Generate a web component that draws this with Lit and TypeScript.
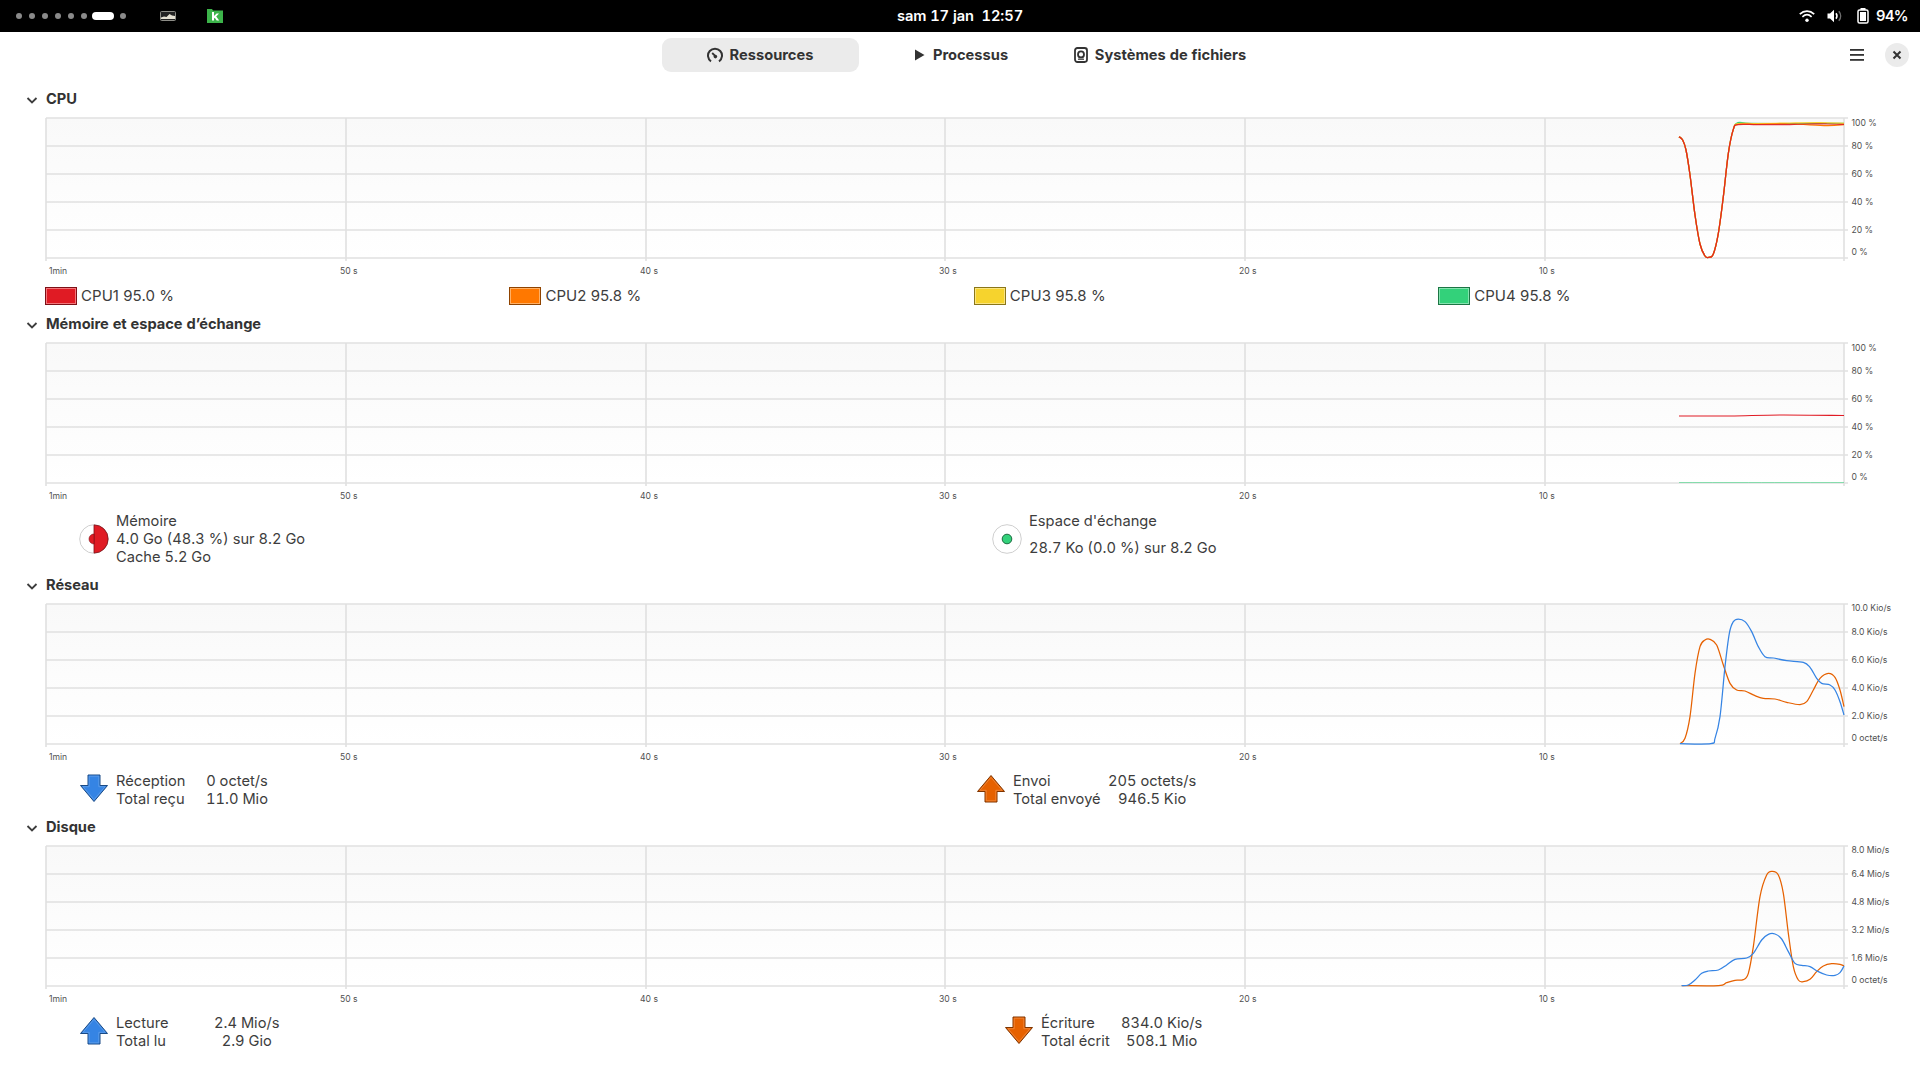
import { LitElement, css, html, svg } from 'lit';
import { customElement, property } from 'lit/decorators.js';

type Pt = [number, number];
interface Curve { color: string; pts: Pt[]; width?: number; alpha?: number }

const LEFT = 46;
const RIGHT = 1844;
const GRID_X = [346, 646, 945, 1245, 1545];
const X_LABELS: [number, string][] = [[49, '1min'], [340, '50 s'], [640, '40 s'], [939, '30 s'], [1239, '20 s'], [1539, '10 s']];

// points read off the 3x crops, so convert back to page coordinates
const crop = (top: number, pts: Pt[]): Pt[] => pts.map(([x, y]) => [1640 + x / 3, top + y / 3]);

function smooth(pts: Pt[]) {
  let d = `M${pts[0][0]} ${pts[0][1]}`;
  for (let i = 0; i < pts.length - 1; i++) {
    const p0 = pts[i - 1] || pts[i];
    const p1 = pts[i];
    const p2 = pts[i + 1];
    const p3 = pts[i + 2] || p2;
    const c1x = p1[0] + (p2[0] - p0[0]) / 6;
    const c1y = p1[1] + (p2[1] - p0[1]) / 6;
    const c2x = p2[0] - (p3[0] - p1[0]) / 6;
    const c2y = p2[1] - (p3[1] - p1[1]) / 6;
    d += ` C${c1x} ${c1y} ${c2x} ${c2y} ${p2[0]} ${p2[1]}`;
  }
  return d;
}

const cpuDip: Pt[] = [[117, 110], [128, 120], [138, 150], [150, 225], [165, 345], [180, 432], [195, 468], [207, 472], [220, 462], [235, 400], [250, 290], [265, 160], [280, 88]];

const CPU_CURVES: Curve[] = [
  { color: '#33d17a', pts: crop(100, [...cpuDip, [294, 68], [330, 70], [450, 71], [540, 70], [612, 70]]) },
  { color: '#f6d32d', pts: crop(100, [...cpuDip, [294, 71], [350, 71], [450, 69], [540, 68], [612, 70]]) },
  { color: '#ff7800', pts: crop(100, [...cpuDip, [294, 73], [350, 73], [450, 72], [560, 77], [612, 74]]) },
  { color: '#e01b24', alpha: 0.88, pts: crop(100, [...cpuDip, [294, 74], [350, 74], [420, 74], [500, 72], [560, 72], [612, 73]]) },
];

const MEM_CURVES: Curve[] = [
  { color: '#33d17a', width: 1, alpha: 0.55, pts: [[1679, 482.5], [1844, 482.5]] },
  { color: '#e01b24', width: 1.1, pts: [[1679, 416], [1730, 416], [1780, 415], [1844, 415.5]] },
];

const NET_CURVES: Curve[] = [
  { color: '#e66100', pts: crop(590, [[120, 461], [135, 445], [150, 380], [165, 250], [180, 170], [195, 150], [210, 148], [230, 165], [250, 225], [270, 280], [290, 300], [315, 303], [345, 317], [370, 325], [405, 327], [440, 337], [480, 344], [500, 335], [520, 300], [540, 265], [565, 250], [585, 262], [600, 300], [612, 350]]) },
  { color: '#3584e4', pts: crop(590, [[120, 461], [212, 461], [225, 445], [240, 380], [255, 230], [268, 130], [280, 95], [295, 87], [315, 95], [335, 125], [355, 170], [375, 200], [400, 204], [440, 212], [490, 217], [510, 232], [530, 265], [545, 280], [570, 285], [585, 300], [600, 335], [612, 375]]) },
];

const DISK_CURVES: Curve[] = [
  { color: '#e66100', pts: crop(840, [[125, 437], [235, 437], [260, 428], [285, 421], [310, 419], [325, 400], [340, 320], [360, 170], [380, 105], [397, 94], [415, 105], [430, 160], [445, 280], [460, 380], [475, 420], [490, 425], [510, 418], [530, 395], [550, 378], [575, 371], [600, 373], [612, 378]]) },
  { color: '#3584e4', pts: crop(840, [[125, 437], [145, 435], [165, 420], [185, 400], [205, 393], [235, 390], [260, 375], [285, 358], [320, 354], [340, 340], [365, 300], [385, 283], [405, 282], [425, 297], [445, 335], [465, 370], [485, 376], [510, 380], [535, 395], [560, 405], [585, 406], [600, 398], [612, 378]]) },
];

@customElement('res-chart')
export class ResChart extends LitElement {
  @property({ type: Number }) top = 0;
  @property({ attribute: false }) curves: Curve[] = [];
  @property({ attribute: false }) yLabels: [number, string][] = [];

  render() {
    const top = this.top;
    const bottom = top + 140;
    const rows = [0, 28, 56, 84, 112, 140];
    return html`
      <svg width="1920" height="162" viewBox="0 ${top - 2} 1920 162">
        <defs>
          <linearGradient id="fade" x1="0" y1="0" x2="0" y2="1">
            <stop offset="0" stop-color="#f9f9f9"></stop>
            <stop offset="1" stop-color="#ffffff"></stop>
          </linearGradient>
        </defs>
        <rect x=${LEFT} y=${top} width=${RIGHT - LEFT} height="140" fill="url(#fade)"></rect>
        ${rows.map((r) => svg`<line class="grid" x1=${LEFT} x2=${RIGHT + 4} y1=${top + r} y2=${top + r}></line>`)}
        ${[LEFT, ...GRID_X, RIGHT].map((x) => svg`<line class="grid" x1=${x} x2=${x} y1=${top} y2=${bottom + 3}></line>`)}
        ${this.curves.map((c) => svg`<path d=${smooth(c.pts)} fill="none" stroke=${c.color} stroke-opacity=${c.alpha || 1} stroke-width=${c.width || 1.25}></path>`)}
        ${X_LABELS.map(([x, t]) => svg`<text class="axis" x=${x} y=${bottom + 15.7}>${t}</text>`)}
        ${this.yLabels.map(([y, t]) => svg`<text class="axis" x="1851.5" y=${y + 3}>${t}</text>`)}
      </svg>
    `;
  }

  static styles = css`
    :host { display: block; height: 162px; }
    svg { display: block; }
    .grid { stroke: #e0e0e0; stroke-width: 1.6; }
    .axis { font: 8.6px 'Inter', sans-serif; fill: #505050; }
  `;
}

const chevron = html`<svg class="chev" width="12" height="12" viewBox="0 0 12 12"><path d="M1.5 4l4.5 4.5L10.5 4" fill="none" stroke="#3d3d3d" stroke-width="1.8"></path></svg>`;

const arrow = (up: boolean, fill: string, edge: string, hi: string) => html`
  <svg class="arrow" width="30" height="29" viewBox="0 0 30 29">
    <g transform=${up ? 'translate(0 29) scale(1 -1)' : ''}>
      <path d="M9 1H21V11.5H28.5L15 27.5L1.5 11.5H9Z" fill=${fill} stroke=${edge} stroke-width="1"></path>
      <path d="M10.2 2.2H19.8V12.7H26L15 25.6L4 12.7H10.2Z" fill="none" stroke=${hi} stroke-width=".8"></path>
    </g>
  </svg>`;

const BLUE = ['#3584e4', '#1a4a85', '#62a0ea'] as const;
const ORANGE = ['#e66100', '#7f3500', '#f08a40'] as const;

const stat = (icon: unknown, rows: [string, string][], labelCol: number, wide: string) => html`
  <div class="stat ${wide}">
    ${icon}
    <div class="stat-grid" style="grid-template-columns:${labelCol}px auto">
      ${rows.map(([a, b]) => html`<span>${a}</span><span class="val">${b}</span>`)}
    </div>
  </div>`;

@customElement('app-root')
export class AppRoot extends LitElement {
  topBar() {
    return html`
      <div class="topbar">
        <div class="tb-left">
          <div class="dots">
            ${[0, 1, 2, 3, 4, 5].map(() => html`<i class="dot"></i>`)}
            <i class="pill"></i>
            <i class="dot"></i>
          </div>
          <svg class="tb-img" width="16" height="10" viewBox="0 0 16 10">
            <rect x=".5" y=".5" width="15" height="9" rx="1" fill="#222" stroke="#8c8c86"></rect>
            <path d="M1 8V6.5L4 5.5 6.5 6 9.5 3 12 4.5 15 5V8Z" fill="#e4e0d2"></path>
          </svg>
          <svg class="tb-k" width="16" height="14" viewBox="0 0 16 14">
            <path d="M0 0H5L6 1.5H16V14H0Z" fill="#3cb44a"></path>
            <path d="M5 3H7V7L9.6 4.5H12L9.2 7.4 12.2 11.5H9.7L7.8 8.8 7 9.5V11.5H5Z" fill="#fff"></path>
          </svg>
        </div>
        <div class="clock">sam 17 jan&nbsp; 12:57</div>
        <div class="tb-right">
          <svg width="16" height="14" viewBox="0 0 16 14" fill="none" stroke="#fff" stroke-width="1.7">
            <path d="M.8 5.2C5 1.2 11 1.2 15.2 5.2"></path>
            <path d="M3.4 7.8C6.2 5.2 9.8 5.2 12.6 7.8"></path>
            <circle cx="8" cy="11.2" r="1.7" fill="#fff" stroke="none"></circle>
          </svg>
          <svg class="vol" width="16" height="14" viewBox="0 0 16 14" fill="none">
            <path d="M0.5 4.5H3L7 .8V13.2L3 9.5H0.5Z" fill="#fff"></path>
            <path d="M9 4.2C10.3 6 10.3 8 9 9.8" stroke="#fff" stroke-width="1.5"></path>
            <path d="M11.8 2.2C14.2 5 14.2 9 11.8 11.8" stroke="#6d6d6d" stroke-width="1.5"></path>
          </svg>
          <svg class="bat" width="12" height="16" viewBox="0 0 12 16">
            <rect x="3.5" y="0" width="5" height="2" fill="#fff"></rect>
            <rect x="1" y="2" width="10" height="13" rx="1.6" fill="none" stroke="#fff" stroke-width="1.5"></rect>
            <rect x="3" y="4" width="6" height="9" fill="#fff"></rect>
          </svg>
          <span class="pct">94%</span>
        </div>
      </div>
    `;
  }

  headerBar() {
    return html`
      <div class="header">
        <div class="tabs">
          <div class="tab active">
            <svg width="16" height="16" viewBox="0 0 16 16" fill="none" stroke="#333" stroke-width="2">
              <path d="M4 14.4A7 7 0 1 1 12 14.4"></path>
              <path d="M5.2 6L8.4 9.2" stroke-width="1.8"></path>
              <circle cx="8.4" cy="9.6" r="1.8" fill="#333" stroke="none"></circle>
            </svg>
            Ressources
          </div>
          <div class="tab">
            <svg width="14" height="14" viewBox="0 0 14 14"><path d="M3 1.5L12.5 7 3 12.5Z" fill="#333"></path></svg>
            Processus
          </div>
          <div class="tab">
            <svg width="14" height="16" viewBox="0 0 14 16" fill="none" stroke="#333">
              <rect x="1" y="1" width="12" height="14" rx="2.4" stroke-width="1.8"></rect>
              <circle cx="7" cy="7.4" r="3" stroke-width="1.8"></circle>
              <path d="M4 12.2H10" stroke-width="1.2"></path>
            </svg>
            Systèmes de fichiers
          </div>
        </div>
        <div class="actions">
          <svg width="14" height="12" viewBox="0 0 14 12" fill="#333"><rect width="14" height="1.8"></rect><rect y="5" width="14" height="1.8"></rect><rect y="10" width="14" height="1.8"></rect></svg>
          <div class="close">
            <svg width="10" height="10" viewBox="0 0 10 10"><path d="M1.5 1.5L8.5 8.5M8.5 1.5L1.5 8.5" stroke="#333" stroke-width="2"></path></svg>
          </div>
        </div>
      </div>
    `;
  }

  render() {
    const pct = (t: number, bottomOffset = -6): [number, string][] => [
      [t + 4.5, '100 %'], [t + 28, '80 %'], [t + 56, '60 %'], [t + 84, '40 %'], [t + 112, '20 %'], [t + 140 + bottomOffset, '0 %'],
    ];
    const net: [number, string][] = [[608, '10.0 Kio/s'], [632, '8.0 Kio/s'], [660, '6.0 Kio/s'], [688, '4.0 Kio/s'], [716, '2.0 Kio/s'], [738, '0 octet/s']];
    const disk: [number, string][] = [[850, '8.0 Mio/s'], [874, '6.4 Mio/s'], [902, '4.8 Mio/s'], [930, '3.2 Mio/s'], [958, '1.6 Mio/s'], [980, '0 octet/s']];
    const cores: [string, string, string, string][] = [
      ['CPU1 95.0 %', '#e01b24', '#7d1016', '#f3767b'],
      ['CPU2 95.8 %', '#ff7800', '#8f4300', '#ffb066'],
      ['CPU3 95.8 %', '#f6d32d', '#8a7619', '#fae47f'],
      ['CPU4 95.8 %', '#33d17a', '#1c7544', '#84e3af'],
    ];

    return html`
      ${this.topBar()}
      ${this.headerBar()}
      <main>
        <section class="first">
          <div class="title">${chevron}<span>CPU</span></div>
          <res-chart .top=${118} .curves=${CPU_CURVES} .yLabels=${pct(118)}></res-chart>
          <div class="cpu-legend">
            ${cores.map(([label, c, edge, hi]) => html`
              <div class="core">
                <span class="swatch" style="background:${c};border-color:${edge};box-shadow:inset 0 0 0 1px ${hi}"></span>
                ${label}
              </div>`)}
          </div>
        </section>

        <section>
          <div class="title">${chevron}<span>Mémoire et espace d’échange</span></div>
          <res-chart .top=${343} .curves=${MEM_CURVES} .yLabels=${pct(343)}></res-chart>
          <div class="legend mem">
            <div class="stat w913">
              <svg class="pie" width="30" height="30" viewBox="0 0 30 30">
                <circle cx="15" cy="15" r="14.3" fill="#fff" stroke="#cfcfcf"></circle>
                <path d="M15 .9A14.1 14.1 0 0 1 15 29.1Z" fill="#e01b24" stroke="#7d1016" stroke-width=".8"></path>
                <path d="M15 10A5 5 0 0 0 15 20Z" fill="#e01b24" stroke="#7d1016" stroke-width=".6"></path>
              </svg>
              <div class="lines"><div>Mémoire</div><div>4.0 Go (48.3 %) sur 8.2 Go</div><div>Cache 5.2 Go</div></div>
            </div>
            <div class="stat">
              <svg class="pie" width="30" height="30" viewBox="0 0 30 30">
                <circle cx="15" cy="15" r="14.3" fill="#fff" stroke="#cfcfcf"></circle>
                <circle cx="15" cy="15" r="4.8" fill="#33d17a" stroke="#1c6b40"></circle>
              </svg>
              <div class="lines swap"><div>Espace d'échange</div><div>28.7 Ko (0.0 %) sur 8.2 Go</div></div>
            </div>
          </div>
        </section>

        <section>
          <div class="title">${chevron}<span>Réseau</span></div>
          <res-chart .top=${604} .curves=${NET_CURVES} .yLabels=${net}></res-chart>
          <div class="legend">
            ${stat(arrow(false, ...BLUE), [['Réception', '0 octet/s'], ['Total reçu', '11.0 Mio']], 90, 'w897')}
            ${stat(arrow(true, ...ORANGE), [['Envoi', '205 octets/s'], ['Total envoyé', '946.5 Kio']], 95, '')}
          </div>
        </section>

        <section>
          <div class="title">${chevron}<span>Disque</span></div>
          <res-chart .top=${846} .curves=${DISK_CURVES} .yLabels=${disk}></res-chart>
          <div class="legend">
            ${stat(arrow(true, ...BLUE), [['Lecture', '2.4 Mio/s'], ['Total lu', '2.9 Gio']], 98, 'w925')}
            ${stat(arrow(false, ...ORANGE), [['Écriture', '834.0 Kio/s'], ['Total écrit', '508.1 Mio']], 80, '')}
          </div>
        </section>
      </main>
    `;
  }

  static styles = css`
    :host {
      display: block;
      width: 1920px;
      height: 1080px;
      overflow: hidden;
      background: #fff;
      color: #3d3d3d;
      font: 14.67px/18px 'Inter', sans-serif;
      font-variant-numeric: tabular-nums;
    }

    .topbar {
      height: 32px;
      background: #000;
      color: #fff;
      display: grid;
      grid-template-columns: 1fr auto 1fr;
      align-items: center;
      font-weight: 600;
    }
    .tb-left { display: flex; align-items: center; padding-left: 16px; }
    .dots { display: flex; align-items: center; gap: 7px; width: 144px; }
    .dot { width: 6px; height: 6px; border-radius: 50%; background: #8a8a8a; }
    .pill { width: 22px; height: 8px; border-radius: 4px; background: #fff; margin: 0 -1px 0 -2px; }
    .tb-k { margin: -1px 0 0 31px; }
    .clock { letter-spacing: -0.08px; }
    .tb-right { display: flex; align-items: center; justify-content: flex-end; padding-right: 12px; }
    .vol { margin-left: 12px; }
    .bat { margin-left: 14px; }
    .pct { margin-left: 7px; letter-spacing: -0.6px; }

    .header {
      height: 46px;
      display: grid;
      grid-template-columns: 1fr auto 1fr;
      align-items: center;
      color: #333;
      font-weight: 700;
    }
    .tabs { grid-column: 2; display: flex; gap: 3px; }
    .tab {
      width: 197px;
      height: 34px;
      border-radius: 9px;
      display: flex;
      align-items: center;
      justify-content: center;
      gap: 7px;
    }
    .tab.active { background: #ebebeb; }
    .actions { grid-column: 3; justify-self: end; display: flex; align-items: center; gap: 21px; padding-right: 11px; }
    .close {
      width: 24px;
      height: 24px;
      border-radius: 50%;
      background: #ebebeb;
      display: flex;
      align-items: center;
      justify-content: center;
    }

    main { display: flex; flex-direction: column; }
    section { margin-top: 7px; }
    section.first { margin-top: 9px; }
    .title {
      height: 24px;
      display: flex;
      align-items: center;
      color: #333;
      font-weight: 700;
      letter-spacing: -0.04px;
      margin-bottom: 5px;
    }
    .chev { margin: 1px 8px 0 26px; }

    .cpu-legend {
      margin-top: 9px;
      padding-left: 45px;
      display: grid;
      grid-template-columns: repeat(4, 464.4px);
      height: 18px;
      font-size: 15px;
      letter-spacing: 0.05px;
      font-variant-numeric: normal;
    }
    .core { display: flex; align-items: center; gap: 4px; }
    .swatch { width: 32px; height: 18px; box-sizing: border-box; border: 1px solid; }

    .legend { margin-top: 8px; padding-left: 79px; display: flex; align-items: center; }
    .legend.mem { margin-top: 9px; height: 54px; }
    .stat { display: flex; align-items: center; gap: 7px; }
    .legend.mem .stat { height: 54px; }
    .w913 { width: 913px; }
    .w897 { width: 897px; }
    .w925 { width: 925px; }
    .lines.swap { display: flex; flex-direction: column; gap: 9px; align-self: flex-start; }
    .arrow { margin-bottom: 3px; }
    .stat-grid { display: grid; }
    .val { text-align: center; }
  `;
}

declare global {
  interface HTMLElementTagNameMap {
    'app-root': AppRoot;
    'res-chart': ResChart;
  }
}
